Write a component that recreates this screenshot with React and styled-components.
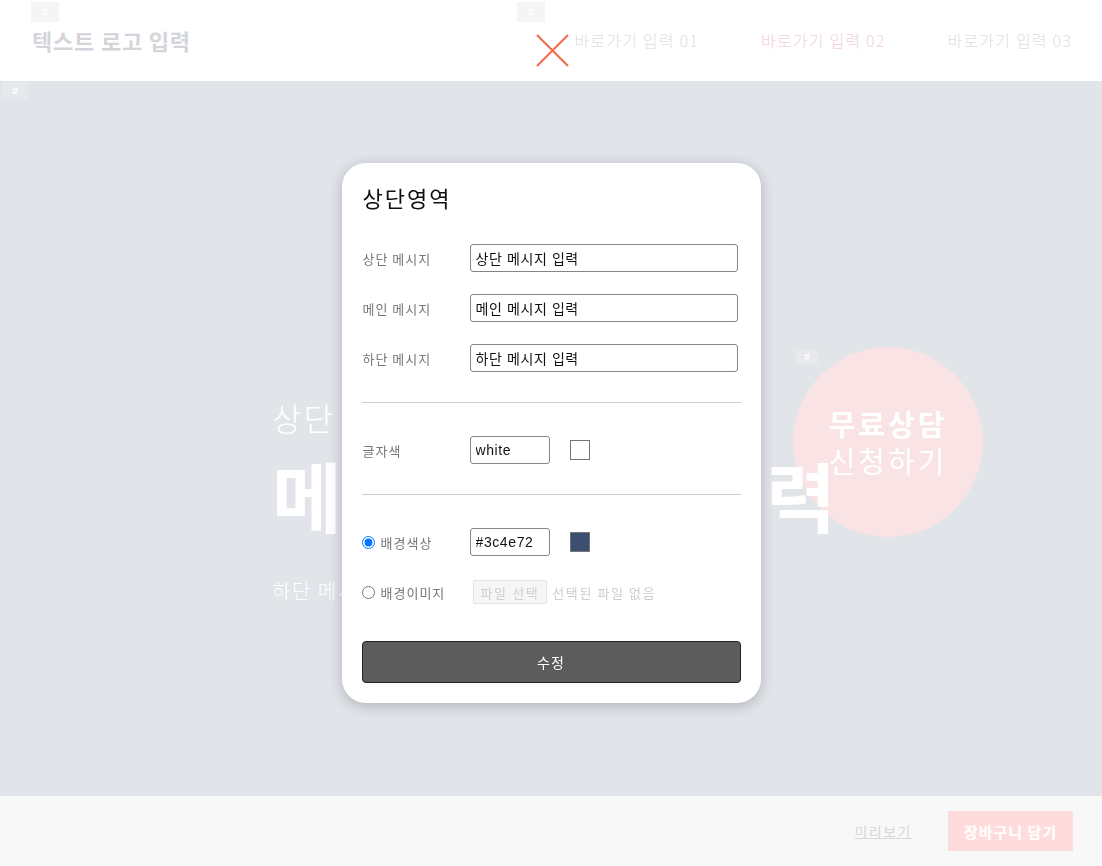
import styled, { createGlobalStyle } from 'styled-components';

const GlobalStyle = createGlobalStyle`
  html, body {
    margin: 0;
    padding: 0;
  }
  body {
    font-family: "Noto Sans CJK KR", "Noto Sans", sans-serif;
    background: #ffffff;
  }
  * {
    box-sizing: border-box;
  }
`;

const Page = styled.div`
  display: flex;
  flex-direction: column;
  height: 866px;
  overflow: hidden;
`;

const Header = styled.header`
  position: relative;
  flex: 0 0 81px;
  display: flex;
  align-items: center;
  justify-content: space-between;
  padding: 0 30px 2px 32px;
  background: #ffffff;
`;

const Logo = styled.div`
  font-size: 22px;
  font-weight: 700;
  color: #d3d5da;
  letter-spacing: 0.8px;
`;

const Nav = styled.nav`
  display: flex;
  align-items: center;
  gap: 62px;
`;

const NavLink = styled.a`
  font-size: 16px;
  font-weight: 300;
  letter-spacing: 1.2px;
  color: ${(p) => (p.$active ? '#f3d2d4' : '#dcdfe4')};
  text-decoration: none;
`;

const CloseMark = styled.svg`
  position: absolute;
  left: 536px;
  top: 34px;
`;

const Hash = styled.span`
  position: absolute;
  left: ${(p) => p.$x}px;
  top: ${(p) => p.$y}px;
  width: ${(p) => p.$w || 28}px;
  height: ${(p) => p.$h || 20}px;
  display: flex;
  align-items: center;
  justify-content: center;
  background: ${(p) => p.$bg || '#f5f5f5'};
  color: #ffffff;
  font-family: "Liberation Sans", Arial, sans-serif;
  font-size: 10px;
  font-weight: 700;
`;

const Hero = styled.section`
  position: relative;
  flex: 1;
  background: #e1e4e9;
  padding: 314px 0 0 272px;
  color: #ffffff;
`;

const HeroText = styled.div`
  position: relative;
  z-index: 1;
  display: flex;
  flex-direction: column;
`;

const TopMessage = styled.div`
  font-size: 32px;
  font-weight: 300;
  line-height: 44px;
  letter-spacing: 2px;
`;

const MainMessage = styled.div`
  font-size: 76px;
  font-weight: 700;
  line-height: 110px;
  letter-spacing: 5px;
`;

const BottomMessage = styled.div`
  margin-top: 27px;
  font-size: 20px;
  font-weight: 300;
  line-height: 30px;
  letter-spacing: 1.5px;
`;

const Consult = styled.div`
  position: absolute;
  left: 793px;
  top: 266px;
  width: 190px;
  height: 190px;
  border-radius: 50%;
  background: #f9e3e4;
  display: flex;
  flex-direction: column;
  align-items: center;
  justify-content: center;
  color: #ffffff;
  font-size: 29px;
  line-height: 37px;
  letter-spacing: 3px;
`;

const Strong = styled.span`
  font-weight: 700;
`;

const Light = styled.span`
  font-weight: 400;
`;

const Footer = styled.footer`
  flex: 0 0 70px;
  display: flex;
  align-items: center;
  justify-content: flex-end;
  gap: 36px;
  padding-right: 29px;
  background: #f8f8f8;
`;

const Preview = styled.a`
  font-size: 14px;
  letter-spacing: 1.5px;
  color: #d6d8dc;
  text-decoration: underline;
`;

const CartButton = styled.button`
  width: 125px;
  height: 40px;
  border: 0;
  background: #ffdcdc;
  color: #ffffff;
  font-family: inherit;
  font-size: 15px;
  font-weight: 700;
  letter-spacing: 1px;
`;

const Overlay = styled.div`
  position: fixed;
  inset: 0;
  display: flex;
  align-items: center;
  justify-content: center;
  z-index: 10;
`;

const Modal = styled.div`
  width: 419px;
  height: 540px;
  padding: 18px 20px 20px;
  background: #ffffff;
  border-radius: 24px;
  box-shadow: 0 3px 14px rgba(0, 0, 0, 0.22);
  display: flex;
  flex-direction: column;
`;

const Title = styled.h2`
  margin: 0 0 30px 1px;
  font-size: 22px;
  font-weight: 400;
  line-height: 33px;
  letter-spacing: 2px;
  color: #111111;
`;

const Fields = styled.div`
  display: flex;
  flex-direction: column;
  gap: ${(p) => p.$gap || 22}px;
`;

const Row = styled.div`
  display: flex;
  align-items: center;
  height: ${(p) => p.$h || 28}px;
`;

const Label = styled.label`
  flex: 0 0 108px;
  display: flex;
  align-items: center;
  gap: 6px;
  padding-left: ${(p) => (p.$radio ? 0 : 1)}px;
  font-size: 13px;
  letter-spacing: 1px;
  color: #777777;
`;

const TextInput = styled.input`
  width: ${(p) => p.$w || 268}px;
  height: 28px;
  padding: 0 5px;
  border: 1px solid #858585;
  border-radius: 3px;
  font-family: "Liberation Sans", Arial, "Noto Sans CJK KR", sans-serif;
  font-size: 14px;
  letter-spacing: 0.6px;
  color: #111111;
  outline: none;
`;

const Swatch = styled.span`
  width: 20px;
  height: 20px;
  margin-left: 20px;
  border: 1px solid #777777;
  background: ${(p) => p.$color};
`;

const Divider = styled.hr`
  margin: 30px 0 33px;
  border: 0;
  border-top: 1px solid #cccccc;
`;

const Radio = styled.input`
  width: 13px;
  height: 13px;
  margin: 0;
`;

const FileButton = styled.span`
  margin-left: 3px;
  height: 24px;
  padding: 0 7px;
  display: flex;
  align-items: center;
  border: 1px solid #e3e3e3;
  border-radius: 2px;
  background: #f6f6f6;
  color: #cfcfd4;
  font-size: 13px;
  letter-spacing: 1.6px;
`;

const FileName = styled.span`
  margin-left: 5px;
  font-size: 13px;
  letter-spacing: 1.6px;
  color: #cdcdd1;
`;

const Submit = styled.button`
  margin-top: 37px;
  height: 42px;
  border: 1px solid #222222;
  border-radius: 4px;
  background: #5c5c5c;
  color: #ffffff;
  font-family: inherit;
  font-size: 14px;
  letter-spacing: 1px;
`;

export default function App() {
  return (
    <>
      <GlobalStyle />
      <Page>
        <Header>
          <Hash $x={31} $y={2}>#</Hash>
          <Hash $x={517} $y={2}>#</Hash>
          <Logo>텍스트 로고 입력</Logo>
          <CloseMark width="33" height="33" viewBox="0 0 33 33">
            <path d="M1 1 L32 32 M32 1 L1 32" stroke="#f26a4b" strokeWidth="2" fill="none" />
          </CloseMark>
          <Nav>
            <NavLink>바로가기 입력 01</NavLink>
            <NavLink $active>바로가기 입력 02</NavLink>
            <NavLink>바로가기 입력 03</NavLink>
          </Nav>
        </Header>
        <Hero>
          <Hash $x={2} $y={1} $w={26} $h={18} $bg="#e5e8ec">#</Hash>
          <Hash $x={796} $y={269} $w={22} $h={14} $bg="#e7e9ed">#</Hash>
          <HeroText>
            <TopMessage>상단 메시지 입력</TopMessage>
            <MainMessage>메인 메시지 입력</MainMessage>
            <BottomMessage>하단 메시지 입력</BottomMessage>
          </HeroText>
          <Consult>
            <Strong>무료상담</Strong>
            <Light>신청하기</Light>
          </Consult>
        </Hero>
        <Footer>
          <Preview>미리보기</Preview>
          <CartButton>장바구니 담기</CartButton>
        </Footer>
      </Page>
      <Overlay>
        <Modal>
          <Title>상단영역</Title>
          <Fields>
            <Row>
              <Label>상단 메시지</Label>
              <TextInput defaultValue="상단 메시지 입력" />
            </Row>
            <Row>
              <Label>메인 메시지</Label>
              <TextInput defaultValue="메인 메시지 입력" />
            </Row>
            <Row>
              <Label>하단 메시지</Label>
              <TextInput defaultValue="하단 메시지 입력" />
            </Row>
          </Fields>
          <Divider />
          <Row>
            <Label>글자색</Label>
            <TextInput $w={80} defaultValue="white" />
            <Swatch $color="#ffffff" />
          </Row>
          <Divider />
          <Fields $gap={24}>
            <Row>
              <Label $radio>
                <Radio type="radio" name="bg" defaultChecked />
                배경색상
              </Label>
              <TextInput $w={80} defaultValue="#3c4e72" />
              <Swatch $color="#3c4e72" />
            </Row>
            <Row $h={24}>
              <Label $radio>
                <Radio type="radio" name="bg" />
                배경이미지
              </Label>
              <FileButton>파일 선택</FileButton>
              <FileName>선택된 파일 없음</FileName>
            </Row>
          </Fields>
          <Submit>수정</Submit>
        </Modal>
      </Overlay>
    </>
  );
}
